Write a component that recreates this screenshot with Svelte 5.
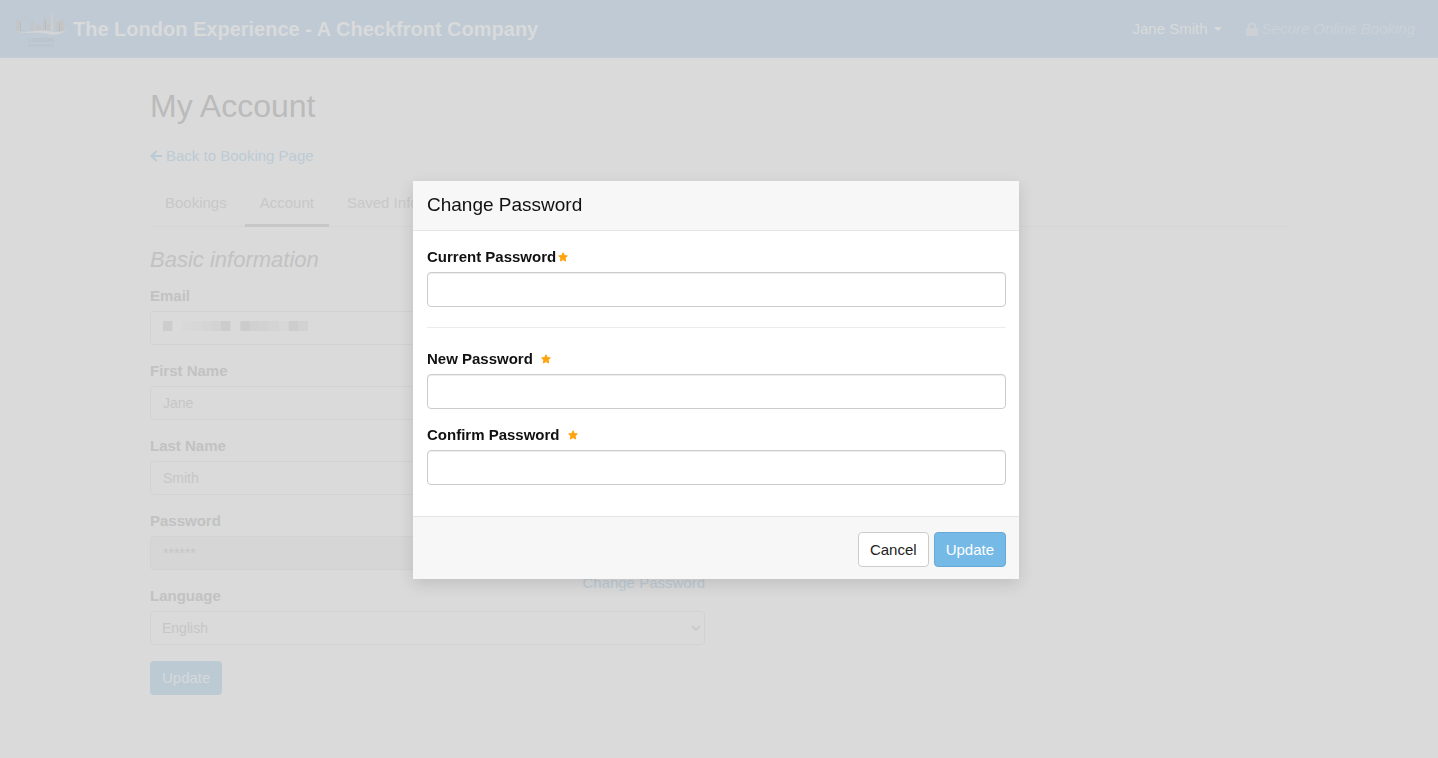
<script>
  const tabs = [
    { label: 'Bookings', active: false },
    { label: 'Account', active: true },
    { label: 'Saved Info', active: false }
  ];

  // Shade of each 10px block that masks the e-mail address.
  const mask = ['#cdcdcd', '#dbdbdb', '#d8d8d8', '#d7d7d7', '#d5d5d5', '#d3d3d3', '#cccccc', '#dadada',
    '#cccccc', '#d1d1d1', '#d2d2d2', '#d4d4d4', '#d7d7d7', '#cdcdcd', '#d2d2d2'];

  let firstName = $state('Jane');
  let lastName = $state('Smith');
  let language = $state('English');
  let current = $state('');
  let next = $state('');
  let confirm = $state('');
</script>

{#snippet star()}
  <svg class="star" viewBox="0 0 20 20" aria-hidden="true">
    <path d="M10 1.500l2.600 5.500 6 .8-4.400 4.200 1.100 6-5.300-2.900-5.300 2.900 1.100-6-4.400-4.200 6-.8z" fill="#ffa30f" stroke="#ffa30f" stroke-width="2" stroke-linejoin="round" />
  </svg>
{/snippet}

<div class="page">
  <header>
    <svg class="logo" viewBox="0 0 52 40" aria-hidden="true">
      <g fill="#c4c5c6">
        <path d="M1 11l4 1v10H1zM16 17l1-7 2 3v9h-3zM28 12l1-7 1 7v10h-2zM32 14h3v8h-3zM41 13h3v9h-3zM45 10l4 1v11h-4zM21 18l2-3 3 3v4h-5z" />
        <path d="M36 8l1-6 1 6v14h-2z" fill="#cfcecb" />
        <path d="M5 13h1v9H5zM30 11h1v11h-1zM44 13h1v9h-1z" fill="#b8babb" />
      </g>
      <circle cx="10" cy="16" r="6" fill="none" stroke="#c2c8cd" />
      <path d="M0 22c13 3 22-2 33 0 7 1 12 2 19-1-5 4-12 6-20 4-11-3-20 1-32-3z" fill="#d2d4d5" />
      <text x="26" y="33" text-anchor="middle" font-size="6" fill="#b4bcc4">LONDON</text>
      <text x="26" y="38" text-anchor="middle" font-size="4" fill="#b8c0c8">EXPERIENCE</text>
    </svg>
    <strong>The London Experience - A Checkfront Company</strong>
    <nav class="user">
      <button class="menu" type="button">Jane Smith <i class="caret"></i></button>
      <span class="secure">
        <svg viewBox="0 0 12 14" aria-hidden="true">
          <path d="M1 6h1V4.500a4 4 0 0 1 8 0V6h1a1 1 0 0 1 1 1v6a1 1 0 0 1-1 1H1a1 1 0 0 1-1-1V7a1 1 0 0 1 1-1zm3 0h4V4.500a2 2 0 0 0-4 0z" fill="#cdd1d6" fill-rule="evenodd" />
        </svg>
        <em>Secure Online Booking</em>
      </span>
    </nav>
  </header>

  <main>
    <h1>My Account</h1>
    <a class="back" href="#booking">
      <svg viewBox="0 0 12 12" aria-hidden="true">
        <path d="M6.500 1L1.500 6l5 5M2 6h10" fill="none" stroke="#b8cad6" stroke-width="2" />
      </svg>
      Back to Booking Page
    </a>
    <nav class="tabs">
      {#each tabs as tab}
        <a href="#{tab.label}" class:active={tab.active}>{tab.label}</a>
      {/each}
    </nav>

    <div class="columns">
      <form>
        <h2>Basic information</h2>
        <div class="field masked">
          <label for="email">Email</label>
          <input id="email" type="email" />
          <svg class="mask" viewBox="0 0 150 10" preserveAspectRatio="none" aria-hidden="true">
            {#each mask as fill, i}
              <rect x={i * 10} width="10" height="10" {fill} />
            {/each}
          </svg>
        </div>
        <div class="field">
          <label for="first">First Name</label>
          <input id="first" type="text" bind:value={firstName} />
        </div>
        <div class="field">
          <label for="last">Last Name</label>
          <input id="last" type="text" bind:value={lastName} />
        </div>
        <div class="field">
          <label for="password">Password</label>
          <input id="password" type="text" value="******" disabled />
          <a class="change" href="#change">Change Password</a>
        </div>
        <div class="field">
          <label for="language">Language</label>
          <select id="language" bind:value={language}>
            <option>English</option>
          </select>
        </div>
        <button class="save" type="button">Update</button>
      </form>
    </div>
  </main>
</div>

<div class="overlay">
  <form class="modal" role="dialog" aria-modal="true" aria-labelledby="dialog-title">
    <h3 id="dialog-title">Change Password</h3>
    <div class="body">
      <div class="entry">
        <label for="current" class="near">Current Password {@render star()}</label>
        <input id="current" type="password" bind:value={current} />
      </div>
      <hr />
      <div class="entry">
        <label for="new">New Password {@render star()}</label>
        <input id="new" type="password" bind:value={next} />
      </div>
      <div class="entry">
        <label for="confirm">Confirm Password {@render star()}</label>
        <input id="confirm" type="password" bind:value={confirm} />
      </div>
    </div>
    <footer>
      <button type="button">Cancel</button>
      <button type="button" class="primary">Update</button>
    </footer>
  </form>
</div>

<style>
  :global(body) {
    background: #dadada;
    font: 15px/20px "Helvetica Neue", "Liberation Sans", Arial, sans-serif;
  }
  * { box-sizing: border-box; }
  h1, h2, h3 { margin: 0; font-weight: 400; }
  a { text-decoration: none; }
  button, input, select { font: inherit; }

  .page { min-height: 100vh; color: #c5c5c5; }
  header {
    display: flex;
    align-items: center;
    height: 58px;
    padding: 0 23px 0 15px;
    background: #bfcad4;
    border-bottom: 1px solid #c4ccd4;
    color: #d9dadb;
  }
  .logo { width: 52px; height: 40px; margin-right: 6px; flex: none; }
  header strong { font-size: 20px; line-height: 28px; }
  .user { display: flex; gap: 24px; margin-left: auto; }
  .menu {
    display: flex;
    align-items: center;
    gap: 6px;
    padding: 0;
    border: 0;
    background: none;
    color: #d9dadb;
  }
  .caret { border: 4px solid transparent; border-top-color: #d9dadb; border-bottom: 0; }
  .secure { display: flex; align-items: center; gap: 4px; color: #cbd1d7; }
  .secure svg { width: 12px; height: 14px; }

  main { max-width: 1168px; margin: 0 auto; padding: 28px 15px 0; }
  h1 { font-size: 32px; line-height: 40px; color: #bbb; }
  .back { display: flex; align-items: center; gap: 4px; margin-top: 20px; color: #bccbd5; }
  .back svg { width: 12px; height: 12px; }
  .tabs { display: flex; gap: 3px; margin-top: 20px; border-bottom: 1px solid #d5d5d5; }
  .tabs a { padding: 7px 15px 11px; margin-bottom: -1px; border-bottom: 3px solid transparent; color: #c8c8c8; }
  .tabs .active { border-color: #c7c7c7; }

  .columns { display: grid; grid-template-columns: 1fr 1fr; gap: 28px; }
  h2 { margin: 19px 0 12px; font-size: 22px; line-height: 28px; font-style: italic; color: #c2c2c2; }
  .field { margin-bottom: 16px; }
  .field label { display: block; margin-bottom: 5px; font-weight: 700; color: #c2c2c2; }
  .field input, .field select {
    display: block;
    width: 100%;
    height: 34px;
    padding: 0 12px;
    border: 1px solid #d2d2d2;
    border-radius: 4px;
    background: #dadada;
    color: #c6c6c6;
    font-size: 14px;
  }
  .field input:disabled { background: #d6d6d6; }
  .field select {
    appearance: none;
    padding: 0 11px;
    background: #dadada url("data:image/svg+xml,%3Csvg xmlns='http://www.w3.org/2000/svg' viewBox='0 0 10 6'%3E%3Cpath d='M1 1l4 4 4-4' fill='none' stroke='%23c4c4c4' stroke-width='1.300'/%3E%3C/svg%3E") no-repeat right 3px center / 10px 6px;
  }
  .masked { position: relative; }
  .mask { position: absolute; left: 13px; top: 35px; width: 145px; height: 10px; }
  .change { float: right; margin-top: 3px; color: #bccbd5; }
  .save {
    height: 34px;
    padding: 0 12px;
    border: 0;
    border-radius: 4px;
    background: #bccad4;
    color: #d6d9db;
  }

  .overlay {
    position: fixed;
    inset: 0;
    display: flex;
    align-items: center;
    justify-content: center;
    padding: 2px 6px 0 0;
  }
  .modal { flex: 0 1 606px; background: #fff; color: #111; box-shadow: 0 5px 15px rgba(0, 0, 0, .12); }
  h3 {
    padding: 11px 14px 13px;
    border-bottom: 1px solid #e5e5e5;
    background: #f7f7f7;
    font-size: 19px;
    line-height: 25px;
  }
  .body { padding: 16px 13px 31px 14px; }
  .entry label { display: flex; align-items: center; gap: 8px; margin-bottom: 5px; font-weight: 700; }
  .entry .near { gap: 2px; }
  .entry + .entry { margin-top: 16px; }
  .star { width: 10px; height: 10px; }
  .entry input {
    display: block;
    width: 100%;
    height: 35px;
    padding: 0 12px;
    border: 1px solid #ccc;
    border-radius: 4px;
    background: #fff;
    box-shadow: inset 0 1px 1px rgba(0, 0, 0, .075);
  }
  hr { height: 1px; margin: 20px 0 21px; border: 0; background: #ececec; }
  footer {
    display: flex;
    justify-content: flex-end;
    gap: 5px;
    padding: 15px 13px 12px;
    border-top: 1px solid #e5e5e5;
    background: #f7f7f7;
  }
  footer button {
    height: 35px;
    padding: 0 11px;
    border: 1px solid #ccc;
    border-radius: 4px;
    background: #fff;
    color: #222;
  }
  footer .primary { border-color: #67a9d6; background: #75b9e7; color: #fff; }
</style>
